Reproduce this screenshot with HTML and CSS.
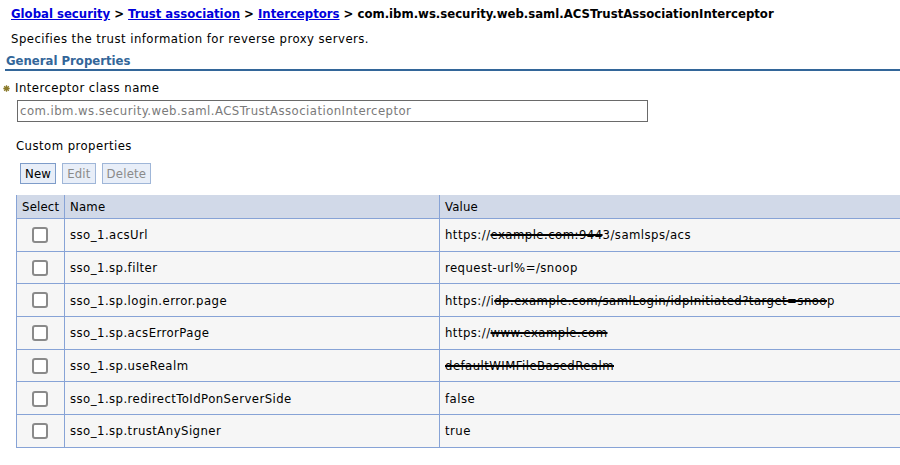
FILE: index.html
```html
<!DOCTYPE html>
<html>
<head>
<meta charset="utf-8">
<link rel="stylesheet" href="styles.css">
</head>
<body>
<div class="page">
  <div class="breadcrumb">
    <a href="#">Global security</a> &gt; <a href="#">Trust association</a> &gt; <a href="#">Interceptors</a> &gt; com.ibm.ws.security.web.saml.ACSTrustAssociationInterceptor
  </div>
  <div class="desc">Specifies the trust information for reverse proxy servers.</div>
  <div class="section-title">General Properties</div>
  <div class="field-label">
    <svg class="req" width="7" height="7" viewBox="0 0 7 7"><path d="M3.5 0.3V6.7M0.3 3.5H6.7M1.2 1.2L5.8 5.8M5.8 1.2L1.2 5.8" stroke="#8a7a2a" stroke-width="1.3"/></svg>
    <span>Interceptor class name</span>
  </div>
  <div class="input">com.ibm.ws.security.web.saml.ACSTrustAssociationInterceptor</div>
  <div class="sub-label">Custom properties</div>
  <div class="buttons">
    <span class="btn">New</span>
    <span class="btn disabled">Edit</span>
    <span class="btn disabled">Delete</span>
  </div>
  <table class="grid">
    <thead>
      <tr><th class="c-sel">Select</th><th class="c-name">Name</th><th class="c-val">Value</th></tr>
    </thead>
    <tbody>
      <tr><td class="c-sel"><span class="cb"></span></td><td>sso_1.acsUrl</td><td>https://<s>example.com:944</s>3/samlsps/acs</td></tr>
      <tr><td class="c-sel"><span class="cb"></span></td><td>sso_1.sp.filter</td><td>request-url%=/snoop</td></tr>
      <tr><td class="c-sel"><span class="cb"></span></td><td>sso_1.sp.login.error.page</td><td>https://i<s>dp.example.com/samlLogin/idpInitiated?target=snoo</s>p</td></tr>
      <tr><td class="c-sel"><span class="cb"></span></td><td>sso_1.sp.acsErrorPage</td><td>https://<s>www.example.com</s></td></tr>
      <tr><td class="c-sel"><span class="cb"></span></td><td>sso_1.sp.useRealm</td><td><s>defaultWIMFileBasedRealm</s></td></tr>
      <tr><td class="c-sel"><span class="cb"></span></td><td>sso_1.sp.redirectToIdPonServerSide</td><td>false</td></tr>
      <tr><td class="c-sel"><span class="cb"></span></td><td>sso_1.sp.trustAnySigner</td><td>true</td></tr>
    </tbody>
  </table>
</div>
</body>
</html>
```

FILE: styles.css
```css
html, body {
  margin: 0;
  padding: 0;
  background: #fff;
  overflow: hidden;
}
body {
  font-family: "DejaVu Sans Condensed", "DejaVu Sans", sans-serif;
  font-size: 13px;
  letter-spacing: 0.45px;
  color: #000;
}
.page {
  width: 900px;
}
.breadcrumb {
  padding: 6px 0 0 11px;
  line-height: 16px;
  font-weight: bold;
  letter-spacing: 0;
  white-space: nowrap;
}
.breadcrumb a {
  color: #0000dd;
  text-decoration: underline;
}
.desc {
  margin-top: 9px;
  padding-left: 11px;
  line-height: 16px;
}
.section-title {
  margin: 6px 0 0 5px;
  padding-left: 1px;
  line-height: 16px;
  font-weight: bold;
  letter-spacing: 0;
  color: #336699;
  border-bottom: 2px solid #336699;
}
.field-label {
  margin-top: 9px;
  display: flex;
  align-items: center;
  line-height: 16px;
  padding-left: 3px;
}
.req {
  margin-right: 5px;
  margin-top: 1px;
}
.input {
  margin: 4px 0 0 17px;
  width: 627px;
  height: 20px;
  border: 1px solid #6a6a6a;
  padding-left: 2px;
  line-height: 20px;
  color: #7a7a7a;
  white-space: nowrap;
  box-sizing: content-box;
}
.sub-label {
  margin: 16px 0 0 16px;
  line-height: 16px;
}
.buttons {
  margin: 9px 0 0 20px;
  display: flex;
  gap: 6px;
}
.btn {
  display: inline-block;
  height: 19px;
  line-height: 19px;
  padding: 0 4px;
  letter-spacing: 0.2px;
  border: 1px solid #7e9cc9;
  background: #e8eef8;
  color: #000;
}
.btn.disabled {
  color: #8a8a8a;
  border-color: #9fb6d8;
}
.grid {
  margin: 9px 0 0 16px;
  border-collapse: collapse;
  width: 900px;
  border-top: 2px solid #87a3d6;
  border-left: 1px solid #87a3d6;
}
.grid th {
  background: #d1d9e8;
  font-weight: normal;
  text-align: left;
  height: 23px;
  padding: 0 0 0 5px;
  letter-spacing: 0.2px;
  border-right: 1px solid #87a3d6;
  border-bottom: 1px solid #87a3d6;
  border-top: 2px solid #fff;
}
.grid td {
  background: #f6f6f6;
  height: 31.7px;
  padding: 0 0 0 5px;
  border-right: 1px solid #87a3d6;
  border-bottom: 1px solid #87a3d6;
  white-space: nowrap;
}
.grid .c-sel {
  width: 42px;
}
.grid td.c-sel {
  text-align: center;
  padding: 0;
}
.grid .c-name {
  width: 369px;
}
.grid s {
  text-decoration: line-through;
  text-decoration-thickness: 2px;
}
.cb {
  display: inline-block;
  width: 12px;
  height: 12px;
  border: 2px solid #8a8a8a;
  border-radius: 3px;
  background: #fff;
  vertical-align: middle;
  margin-left: -2px;
}
```
